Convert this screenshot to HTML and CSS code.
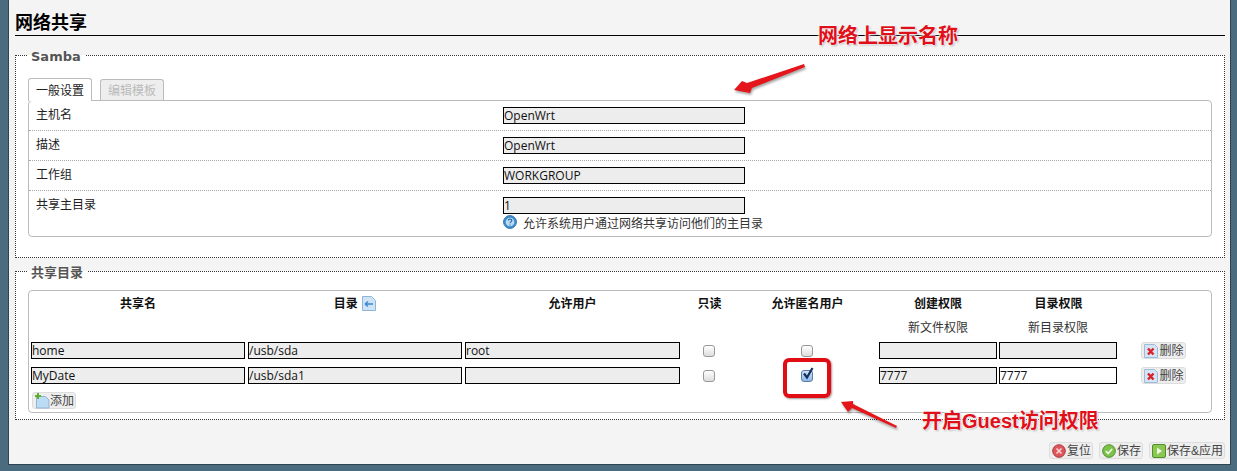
FILE: index.html
```html
<!DOCTYPE html>
<html lang="zh">
<head>
<meta charset="utf-8">
<title>网络共享</title>
<link rel="stylesheet" href="styles.css">
</head>
<body>
<div class="page">
  <h2 class="title">网络共享</h2>
  <fieldset class="section samba">
    <legend>Samba</legend>
    <div class="tabs">
      <span class="tab active">一般设置</span>
      <span class="tab">编辑模板</span>
    </div>
    <div class="box form">
      <div class="row"><label>主机名</label><div class="value"><input class="field wide" value="OpenWrt"></div></div>
      <div class="row"><label>描述</label><div class="value"><input class="field wide" value="OpenWrt"></div></div>
      <div class="row"><label>工作组</label><div class="value"><input class="field wide" value="WORKGROUP"></div></div>
      <div class="row last"><label>共享主目录</label><div class="value"><input class="field wide" value="1">
        <div class="hint"><svg class="help" viewBox="0 0 14 14" width="14" height="14"><circle cx="7" cy="7" r="6.4" fill="#3f8fd0" stroke="#2f6fa8"/><circle cx="7" cy="7" r="4.3" fill="#bcdcf4"/><path d="M5.3 5.6c0-2.1 3.5-2.1 3.5 0 0 1.3-1.8 1.3-1.8 2.7M7 9.400v1.200" fill="none" stroke="#2c6da6" stroke-width="1.2"/></svg><span>允许系统用户通过网络共享访问他们的主目录</span></div>
      </div></div>
    </div>
  </fieldset>
  <fieldset class="section shares">
    <legend>共享目录</legend>
    <div class="box list">
      <table class="grid">
        <colgroup><col class="c-a"><col class="c-a"><col class="c-b"><col class="c-ro"><col class="c-anon"><col class="c-p1"><col class="c-p2"><col class="c-del"></colgroup>
        <thead>
          <tr class="heads">
            <th>共享名</th>
            <th>目录 <svg class="sort" viewBox="0 0 14 15" width="14" height="15"><path d="M.5.5h9l4 4v10H.5z" fill="#cfe3f6" stroke="#8fb4d6"/><path d="M3 8h8M3 8l3-2.500M3 8l3 2.500" fill="none" stroke="#3d8ad0" stroke-width="1.500"/></svg></th>
            <th>允许用户</th><th>只读</th><th>允许匿名用户</th><th>创建权限</th><th>目录权限</th><th></th>
          </tr>
          <tr class="subs"><td></td><td></td><td></td><td></td><td></td><td>新文件权限</td><td>新目录权限</td><td></td></tr>
        </thead>
        <tbody>
          <tr>
            <td><input class="field" value="home"></td><td><input class="field" value="/usb/sda"></td><td><input class="field" value="root"></td>
            <td class="mid"><span class="check"></span></td><td class="mid"><span class="check"></span></td>
            <td><input class="field" value=""></td><td><input class="field" value=""></td>
            <td class="mid"><button class="btn"><svg viewBox="0 0 16 16" width="16" height="16"><path d="M1.500 1.500h10l3 3v10h-13z" fill="#d5e5f6" stroke="#9dbcdc"/><path d="M5 5.500l5.500 6M10.500 5.500l-5.500 6" stroke="#d8232a" stroke-width="2.400"/></svg>删除</button></td>
          </tr>
          <tr>
            <td><input class="field" value="MyDate"></td><td><input class="field" value="/usb/sda1"></td><td><input class="field" value=""></td>
            <td class="mid"><span class="check"></span></td>
            <td class="mid"><span class="check on"><svg viewBox="0 0 14 14" width="14" height="14"><path d="M3 6.500l3 4L11.500 1" fill="none" stroke="#14305c" stroke-width="2.200"/></svg></span></td>
            <td><input class="field" value="7777"></td><td><input class="field white" value="7777"></td>
            <td class="mid"><button class="btn"><svg viewBox="0 0 16 16" width="16" height="16"><path d="M1.500 1.500h10l3 3v10h-13z" fill="#d5e5f6" stroke="#9dbcdc"/><path d="M5 5.500l5.500 6M10.500 5.500l-5.500 6" stroke="#d8232a" stroke-width="2.400"/></svg>删除</button></td>
          </tr>
        </tbody>
      </table>
      <button class="btn add"><svg viewBox="0 0 16 16" width="16" height="16"><path d="M2.500 3.500h9l3.500 3.500v8H2.500z" fill="#bcdcf4" stroke="#8fb4d6"/><path d="M4 0v6M1 3h6" stroke="#5fae2e" stroke-width="2"/></svg>添加</button>
    </div>
  </fieldset>
  <div class="actions">
    <button class="btn"><svg viewBox="0 0 14 14" width="14" height="14"><circle cx="7" cy="7" r="6.300" fill="#e0555c" stroke="#a93a40"/><path d="M4.500 4.500l5 5M9.500 4.500l-5 5" stroke="#f6d5d6" stroke-width="1.600"/></svg>复位</button>
    <button class="btn"><svg viewBox="0 0 14 14" width="14" height="14"><circle cx="7" cy="7" r="6.300" fill="#7cc24a" stroke="#4f8f2a"/><path d="M3.800 7l2.300 2.500 4-4.500" fill="none" stroke="#eef8e4" stroke-width="1.800"/></svg>保存</button>
    <button class="btn"><svg viewBox="0 0 14 14" width="14" height="14"><rect x=".5" y=".5" width="13" height="13" rx="1.500" fill="#8cc653" stroke="#4f8f2a"/><path d="M5 3.500v7l5-3.500z" fill="#eef8e4"/></svg>保存&amp;应用</button>
  </div>
  <span class="note note-name">网络上显示名称</span>
  <svg class="arrow arrow-name" viewBox="0 0 80 40" width="80" height="40"><path d="M74 4L17 23l-5-2-8 9 16 3 2-5L75 7z" fill="#e4161c"/></svg>
  <span class="focus"></span>
  <svg class="arrow arrow-guest" viewBox="0 0 64 36" width="64" height="36"><path d="M61 30L17 8V5L5 6l7 10 4-4 44 20z" fill="#e4161c"/></svg>
  <span class="note note-guest">开启Guest访问权限</span>
</div>
</body>
</html>
```
FILE: styles.css
```css
* { box-sizing: border-box; }
html, body { margin: 0; height: 471px; overflow: hidden; }
body { background: #4b6b7e; font: 12px "Liberation Sans", "Noto Sans CJK SC", sans-serif; color: #111; }
.page { position: relative; width: 1223px; height: 465px; margin-left: 8px; padding: 0 5px 0 6px; background: #f4f4f4; border: 1px solid #30444f; border-top: 0; }
.title { margin: 0; height: 36px; padding-top: 13px; font-size: 18px; line-height: 20px; font-weight: bold; color: #000; border-bottom: 1px solid #000; }
.section { margin: 0; padding: 0 12px; min-width: 0; background: #fff; border: 1px dotted #333; }
.section legend { margin-left: 0; padding: 4px 5px 0 3px; font: bold 13px/16px "DejaVu Sans", "Noto Sans CJK SC", sans-serif; color: #555; }
.samba { margin-top: 9px; height: 213px; }
.shares { margin-top: 3px; height: 159px; }
.tabs { display: flex; gap: 8px; height: 23px; margin-top: 12px; align-items: flex-end; }
.tab { height: 21px; padding: 4px 7px 0; font-size: 12px; line-height: 14px; color: #bbb; background: #eee; border: 1px solid #bbb; border-bottom: 0; border-radius: 3px 3px 0 0; }
.tab.active { height: 23px; padding-top: 5px; color: #222; background: #fff; position: relative; z-index: 1; margin-bottom: -1px; }
.box { border: 1px solid #bbb; border-radius: 4px; background: #fff; }
.form { height: 137px; }
.list { margin-top: 9px; height: 123px; }
.row { display: flex; height: 30px; border-bottom: 1px dotted #aaa; }
.row.last { height: auto; border-bottom: 0; }
.row label { width: 474px; padding: 7px 0 0 7px; line-height: 14px; color: #222; }
.value { padding-top: 6px; }
.field { display: block; width: 100%; height: 17px; padding: 0; font: 12px/15px "Open Sans", "DejaVu Sans", sans-serif; color: #111; background: #ededed; border: 1px solid #000; border-radius: 0; outline: 0; }
.field.wide { width: 242px; }
.field.white { background: #fff; }
.hint { display: flex; align-items: center; gap: 6px; height: 16px; color: #333; }
.help { flex: none; }
.grid { table-layout: fixed; width: 1182px; border-collapse: collapse; }
.c-a { width: 217px; } .c-b { width: 218px; } .c-ro { width: 56px; } .c-anon { width: 140px; } .c-p1 { width: 121px; } .c-p2 { width: 120px; } .c-del { width: 93px; }
.grid th, .grid td { padding: 0 1px 0 2px; }
.grid td:nth-child(7) { padding-left: 1px; }
.grid th { height: 23px; padding-top: 2px; font-size: 12px; line-height: 14px; font-weight: bold; color: #111; text-align: center; }
.subs td { height: 24px; text-align: center; font-size: 12px; color: #333; }
.grid tbody td { height: 25px; }
.grid td.mid { padding: 0 2px 0 0; text-align: center; vertical-align: middle; }
.sort { vertical-align: -3px; margin-left: 1px; }
.check { display: inline-block; position: relative; width: 12px; height: 12px; margin-left: 2px; vertical-align: middle; background: linear-gradient(#fff, #ddd); border: 1px solid #999; border-radius: 3px; }
.check.on { background: linear-gradient(#cfe3f8, #8fb8e8); border-color: #5b7ea8; }
.check svg { position: absolute; left: -1px; top: -4px; }
.btn { display: inline-flex; align-items: center; height: 17px; padding: 0 1px; vertical-align: middle; font: 12px/14px "Liberation Sans", "Noto Sans CJK SC", sans-serif; color: #444; background: #eee; border: 1px solid #ddd; border-radius: 3px; }
.btn svg { flex: none; }
.add { display: flex; margin: 4px 0 0 3px; }
.actions { display: flex; justify-content: flex-end; gap: 6px; margin-top: 22px; }
.actions .btn { padding: 0 1px 0 2px; }
.actions .btn svg { margin-right: 1px; }
.note { position: absolute; font-size: 20px; line-height: 24px; font-weight: bold; color: #e0101a; text-shadow: 0 0 2px #fff, 0 0 2px #fff, 0 0 3px #fff, 1px 1px 2px rgba(0,0,0,.4); }
.note-name { left: 809px; top: 24px; }
.note-guest { left: 913px; top: 409px; }
.arrow { position: absolute; filter: drop-shadow(1px 2px 1px rgba(0,0,0,.35)); }
.arrow-name { left: 721px; top: 60px; }
.arrow-guest { left: 827px; top: 396px; }
.focus { position: absolute; left: 774px; top: 358px; width: 48px; height: 40px; border: 4px solid #e00d14; border-radius: 6px; box-shadow: 1px 1px 2px rgba(0,0,0,.4); }
```
